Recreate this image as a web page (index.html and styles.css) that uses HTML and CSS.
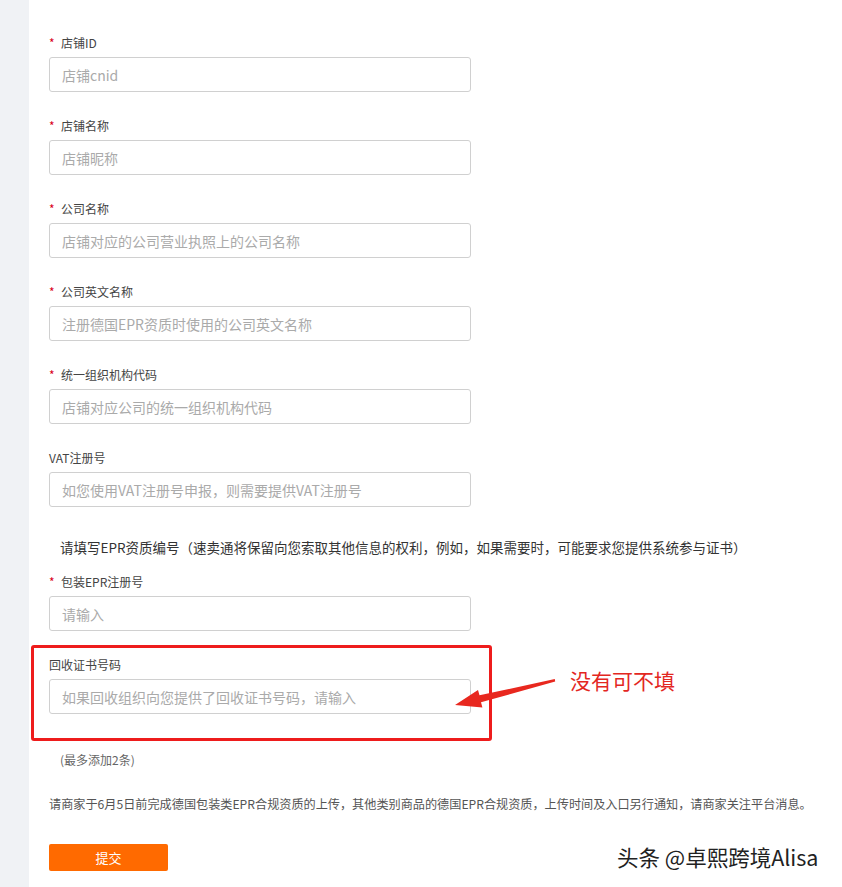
FILE: index.html
```html
<!doctype html>
<html lang="zh">

<head>
  <meta charset="UTF-8" />
  <meta name="viewport" content="width=device-width, initial-scale=1.0" />
  <title>EPR资质</title>
  <link rel="stylesheet" href="styles.css">
</head>

<body>
  <div class="side"></div>
  <div class="main">
    <div class="field">
      <label class="label"><span class="req">*</span>店铺ID</label>
      <input class="input" placeholder="店铺cnid" />
    </div>
    <div class="field">
      <label class="label"><span class="req">*</span>店铺名称</label>
      <input class="input" placeholder="店铺昵称" />
    </div>
    <div class="field">
      <label class="label"><span class="req">*</span>公司名称</label>
      <input class="input" placeholder="店铺对应的公司营业执照上的公司名称" />
    </div>
    <div class="field">
      <label class="label"><span class="req">*</span>公司英文名称</label>
      <input class="input" placeholder="注册德国EPR资质时使用的公司英文名称" />
    </div>
    <div class="field">
      <label class="label"><span class="req">*</span>统一组织机构代码</label>
      <input class="input" placeholder="店铺对应公司的统一组织机构代码" />
    </div>
    <div class="field last">
      <label class="label">VAT注册号</label>
      <input class="input" placeholder="如您使用VAT注册号申报，则需要提供VAT注册号" />
    </div>

    <p class="epr-note">请填写EPR资质编号（速卖通将保留向您索取其他信息的权利，例如，如果需要时，可能要求您提供系统参与证书）</p>

    <div class="field last">
      <label class="label"><span class="req">*</span>包装EPR注册号</label>
      <input class="input" placeholder="请输入" />
    </div>

    <div class="mark-box">
      <div class="field last">
        <label class="label">回收证书号码</label>
        <input class="input" placeholder="如果回收组织向您提供了回收证书号码，请输入" />
      </div>
    </div>

    <p class="limit">(最多添加2条)</p>
    <p class="notice">请商家于6月5日前完成德国包装类EPR合规资质的上传，其他类别商品的德国EPR合规资质，上传时间及入口另行通知，请商家关注平台消息。</p>
    <button class="submit">提交</button>
  </div>

  <!-- 标注 -->
  <svg class="arrow" width="110" height="44" viewBox="0 0 110 44">
    <polygon points="5,33 28,18 29.5,23.3 104.8,7 105.2,9.5 31,30.3 32.4,35.6" fill="#e8281f" />
  </svg>
  <div class="note-red">没有可不填</div>
  <div class="watermark">头条 @卓熙跨境Alisa</div>
</body>

</html>
```

FILE: styles.css
```css
body {
  margin: 0;
  display: flex;
  min-height: 887px;
  font-family: "Noto Sans CJK SC", "Liberation Sans", sans-serif;
  color: #333;
  background: #fff;
  position: relative;
}

.side {
  width: 29px;
  flex: none;
  background: #f0f2f5;
}

.main {
  flex: 1;
  padding: 35px 0 0 20px;
}

.field {
  margin-bottom: 26px;
}

.field.last {
  margin-bottom: 0;
}

.label {
  display: block;
  font-size: 12px;
  line-height: 16px;
  height: 16px;
  color: #444;
  margin-bottom: 6px;
}

.req {
  color: #d9001b;
  display: inline-block;
  width: 12px;
  font-size: 12px;
}

.input {
  display: block;
  box-sizing: border-box;
  width: 422px;
  height: 35px;
  border: 1px solid #d0d0d0;
  border-radius: 3px;
  padding: 0 12px;
  font-family: inherit;
  font-size: 14px;
  color: #333;
  outline: none;
}

.input::placeholder {
  color: #aaa;
}

.epr-note {
  margin: 31px 0 18px 11px;
  font-size: 13.5px;
  line-height: 18px;
  color: #333;
}

.mark-box {
  width: fit-content;
  margin: 14px 0 0 -18px;
  padding: 9px 18px 24px 15px;
  border: 3px solid #ee1c1c;
  border-radius: 3px;
}

.limit {
  margin: 11px 0 0 11px;
  font-size: 12px;
  line-height: 16px;
  color: #666;
}

.notice {
  margin: 28px 0 0;
  font-size: 12.15px;
  line-height: 16px;
  color: #555;
  white-space: nowrap;
}

.submit {
  display: block;
  margin-top: 32px;
  width: 119px;
  height: 27px;
  border: none;
  border-radius: 2px;
  background: #ff6a00;
  color: #fff;
  font-family: inherit;
  font-size: 13px;
}

.arrow {
  position: absolute;
  left: 450px;
  top: 672px;
}

.note-red {
  position: absolute;
  left: 570px;
  top: 666px;
  font-size: 21px;
  line-height: 28px;
  color: #e3271f;
}

.watermark {
  position: absolute;
  left: 617px;
  top: 843px;
  font-size: 21.5px;
  line-height: 28px;
  color: #222;
  text-shadow: 0 0 2px #fff, 1px 1px 0 #fff;
  white-space: nowrap;
}
```
